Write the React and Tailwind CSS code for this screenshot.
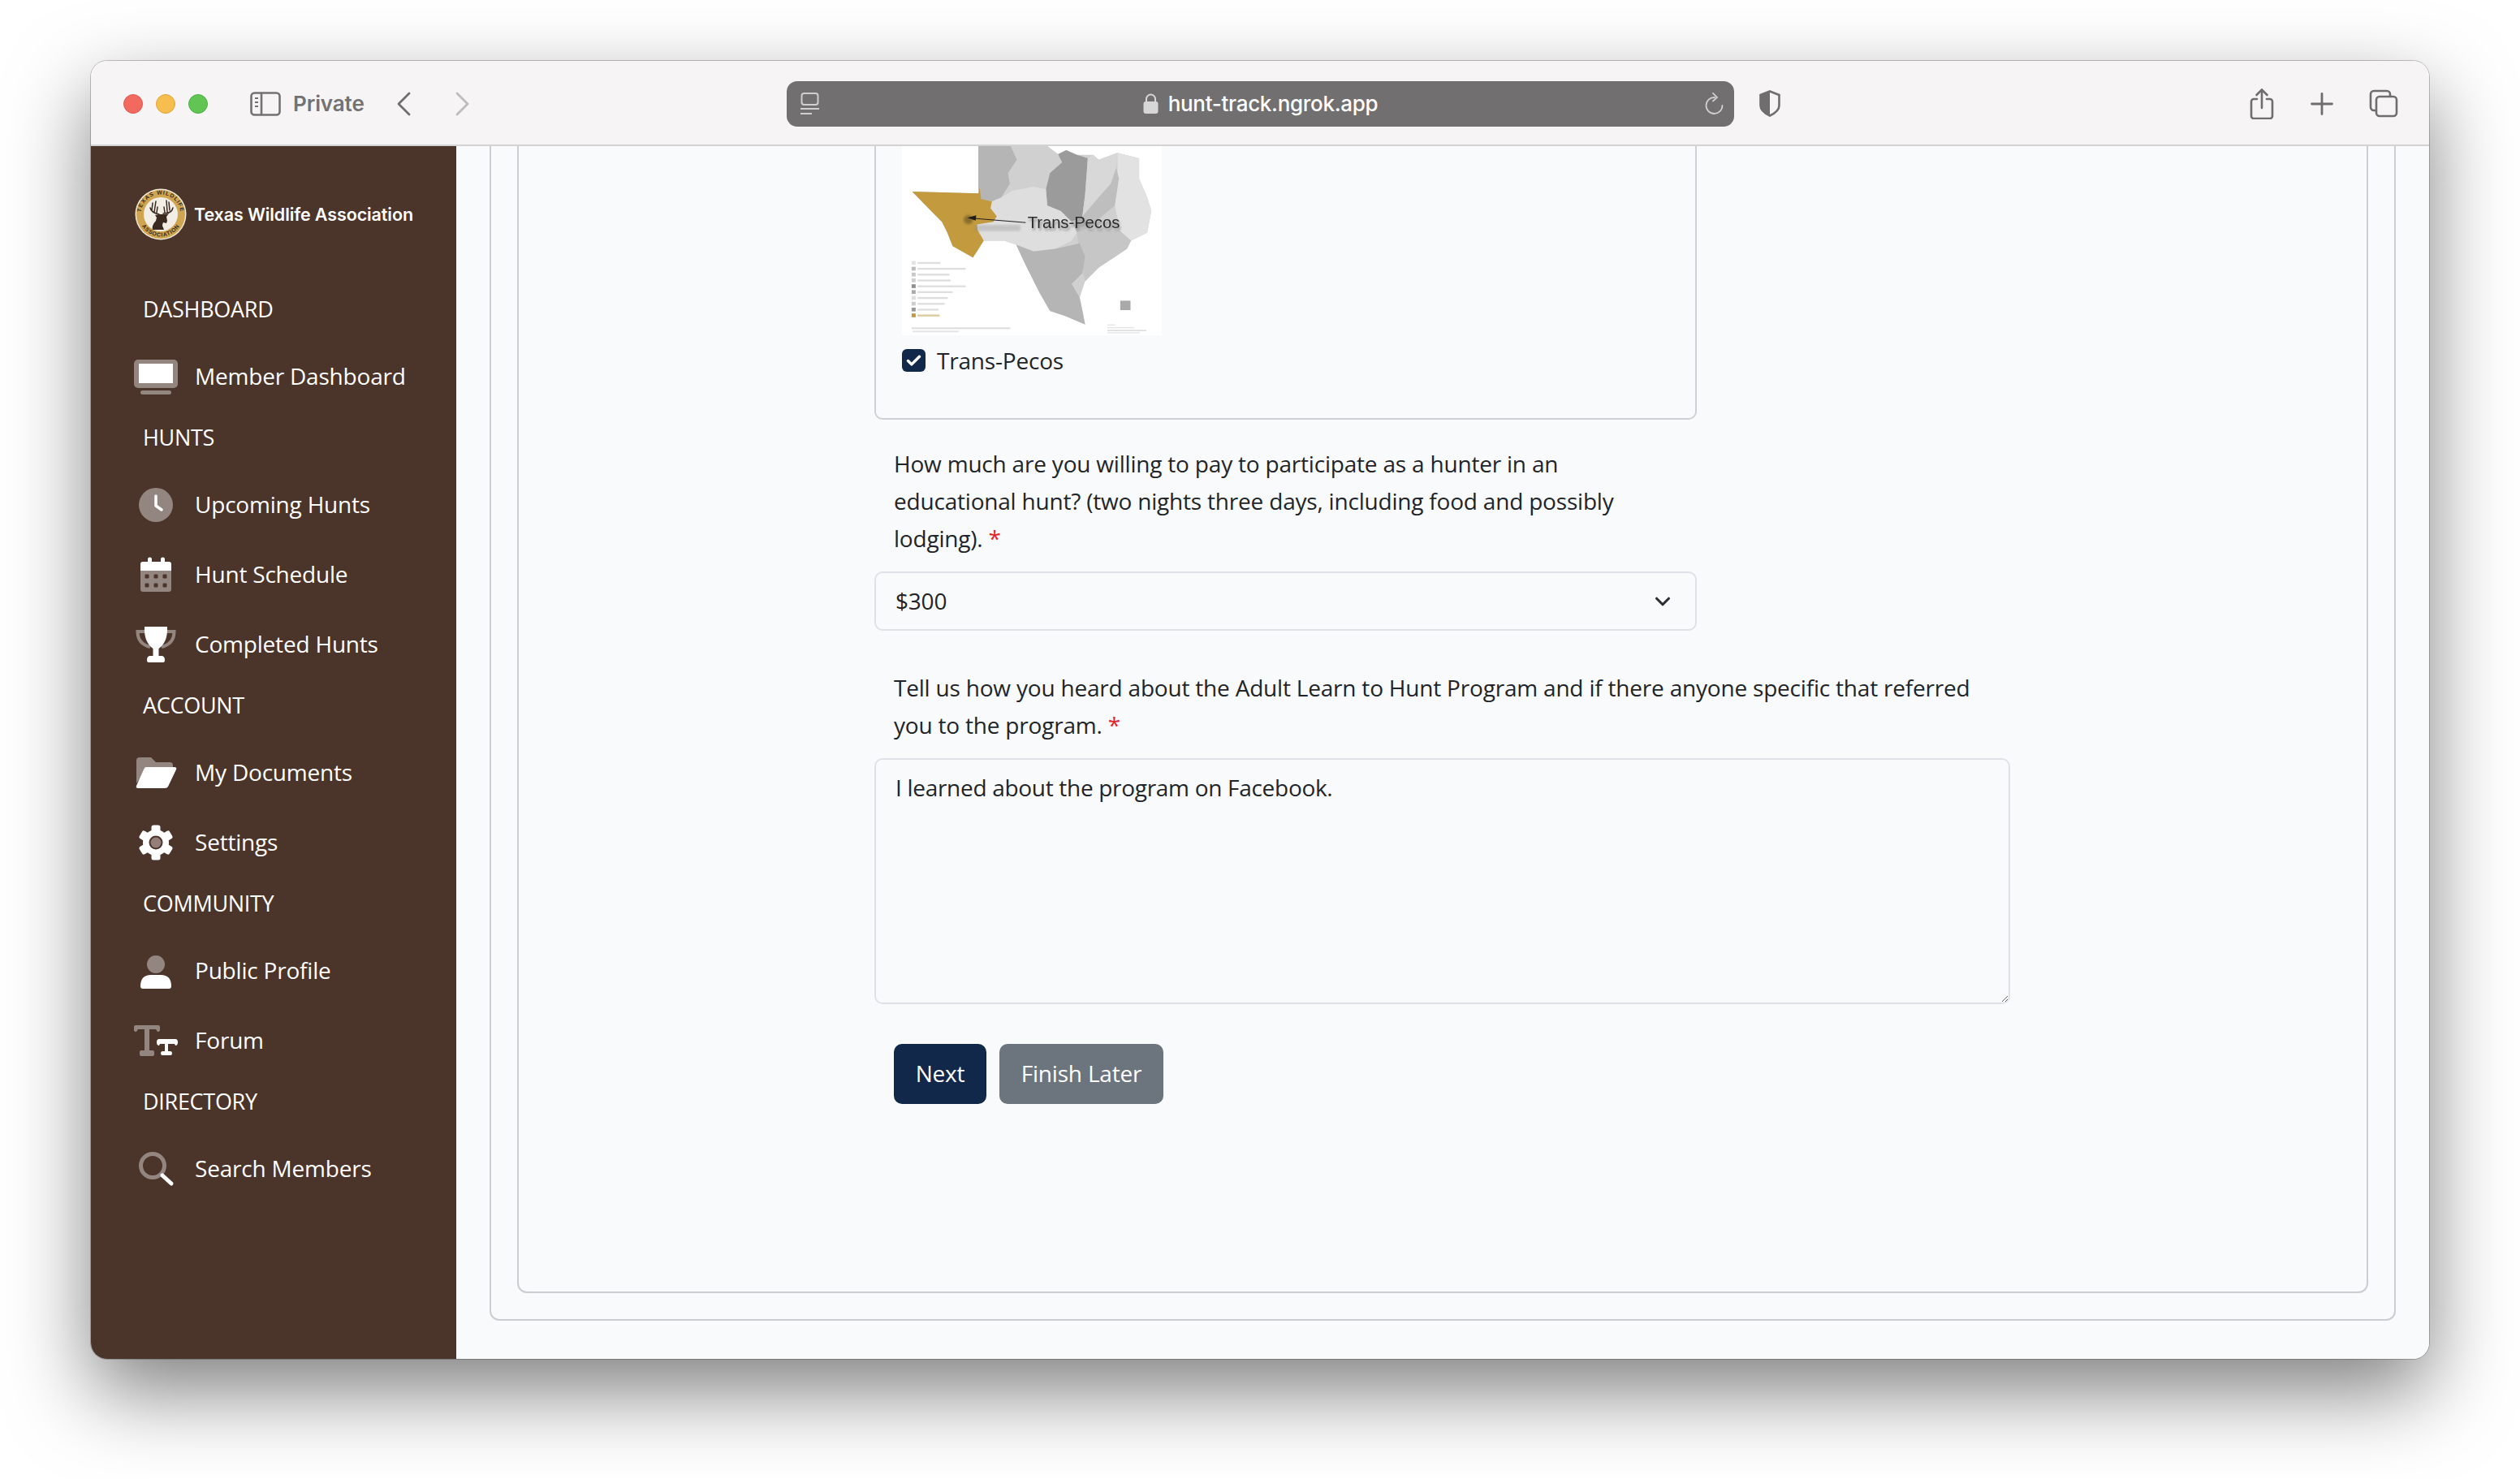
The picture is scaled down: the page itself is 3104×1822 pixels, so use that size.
import React from "react";
import { ChevronDown, Check } from "lucide-react";

const BODY_FONT = "font-['Open_Sans',sans-serif]";

function TrafficLight({ color }) {
  return <span className={`h-6 w-6 rounded-full border ${color}`} />;
}

function SidebarToggleIcon() {
  return (
    <svg width="38" height="30" viewBox="0 0 38 30" fill="none" stroke="#737172" strokeWidth="2.6">
      <rect x="1.5" y="1.5" width="35" height="27" rx="4" />
      <path d="M14 1.5v27" />
      <path d="M6 8h4M6 13h4M6 18h4" strokeWidth="2.2" />
    </svg>
  );
}

function TabOverviewIcon() {
  return (
    <svg width="36" height="35" viewBox="0 0 36 35" fill="none" stroke="#6f6d6e" strokeWidth="2.6">
      <path d="M9 26H6a4 4 0 0 1-4-4V6a4 4 0 0 1 4-4h16a4 4 0 0 1 4 4v3" />
      <rect x="9" y="9" width="25" height="24" rx="4" />
    </svg>
  );
}

function ShareIcon() {
  return (
    <svg width="30" height="38" viewBox="0 0 30 38" fill="none" stroke="#6f6d6e" strokeWidth="2.6" strokeLinecap="round">
      <path d="M9 13H5a3 3 0 0 0-3 3v18a3 3 0 0 0 3 3h20a3 3 0 0 0 3-3V16a3 3 0 0 0-3-3h-4" />
      <path d="M15 24V2M8.5 8L15 1.5 21.5 8" />
    </svg>
  );
}

function PlusIcon() {
  return (
    <svg width="28" height="28" viewBox="0 0 28 28" stroke="#6f6d6e" strokeWidth="2.8" strokeLinecap="round">
      <path d="M14 1.5v25M1.5 14h25" />
    </svg>
  );
}

function ShieldIcon() {
  return (
    <svg width="26" height="33" viewBox="0 0 26 33">
      <path d="M13 1.5L24.5 6v13c0 5-4 9-11.5 12.5C5.500 28 1.500 24 1.500 19V6z" fill="none" stroke="#6f6d6e" strokeWidth="2.6" />
      <path d="M13 1.500L1.500 6v13c0 5 4 9 11.500 12.500z" fill="#6f6d6e" />
    </svg>
  );
}

function PageMenuIcon() {
  return (
    <svg width="23" height="27" viewBox="0 0 23 27" fill="none" stroke="#d0cfcf" strokeWidth="2">
      <rect x="1.500" y="1" width="20" height="14" rx="3" />
      <path d="M0 20h23" />
      <path d="M0 26h14" />
    </svg>
  );
}

function LockIcon() {
  return (
    <svg width="19" height="25" viewBox="0 0 19 25">
      <path d="M4 11V7a5.500 5.500 0 0 1 11 0v4" fill="none" stroke="#d8d7d7" strokeWidth="2" />
      <rect x="0.500" y="10" width="18" height="15" rx="3" fill="#d8d7d7" />
    </svg>
  );
}

function ReloadIcon() {
  return (
    <svg width="23" height="28" viewBox="0 0 23 28" fill="none" stroke="#d0cfcf" strokeWidth="1.800" strokeLinecap="round">
      <path d="M12 6A10 10 0 1 0 21.500 16" />
      <path d="M10 0.800L15 6l-5 4.500" />
    </svg>
  );
}

function BrowserBar() {
  return (
    <header className="flex h-[105px] shrink-0 items-center border-b-2 border-[#d4d3d3] bg-[#f6f4f5] pl-[40px] pt-[2px]">
      <div className="flex gap-4">
        <TrafficLight color="border-[#e2574e] bg-[#f2695f]" />
        <TrafficLight color="border-[#dfa33c] bg-[#f6bd4f]" />
        <TrafficLight color="border-[#4fae44] bg-[#61c554]" />
      </div>
      <div className="ml-[52px]">
        <SidebarToggleIcon />
      </div>
      <span className="ml-[15px] w-[88px] font-['Inter',sans-serif] text-[26px] font-semibold tracking-[-0.1px] text-[#737172]">Private</span>
      <svg className="ml-[40px]" width="17" height="30" viewBox="0 0 17 30" fill="none" stroke="#6f6d6e" strokeWidth="2.800" strokeLinecap="round" strokeLinejoin="round">
        <path d="M15 2L2 15l13 13" />
      </svg>
      <svg className="ml-[55px]" width="17" height="30" viewBox="0 0 17 30" fill="none" stroke="#bdbcbc" strokeWidth="2.800" strokeLinecap="round" strokeLinejoin="round">
        <path d="M2 2l13 13L2 28" />
      </svg>
      <div className="ml-[391px] flex h-[56px] w-[1167px] items-center rounded-[13px] bg-[#716f70] pl-[17px] pr-[13px]">
        <PageMenuIcon />
        <div className="flex flex-1 items-center justify-center gap-[12px] pr-[4px]">
          <LockIcon />
          <span className="font-['Inter',sans-serif] text-[26px] font-medium tracking-[-0.3px] text-white">hunt-track.ngrok.app</span>
        </div>
        <ReloadIcon />
      </div>
      <div className="ml-[31px]">
        <ShieldIcon />
      </div>
      <div className="ml-[578px]">
        <ShareIcon />
      </div>
      <div className="ml-[45px]">
        <PlusIcon />
      </div>
      <div className="ml-[44px]">
        <TabOverviewIcon />
      </div>
    </header>
  );
}

function WildlifeLogo() {
  return (
    <svg width="64" height="64" viewBox="0 0 64 64" className="shrink-0">
      <defs>
        <path id="ring-top" d="M7.500 32A24.500 24.500 0 0 1 56.500 32" />
        <path id="ring-bottom" d="M4.500 32A27.500 27.500 0 0 0 59.500 32" />
      </defs>
      <circle cx="32" cy="32" r="31.500" fill="#efe9dc" />
      <circle cx="32" cy="32" r="30" fill="#cfa552" />
      <circle cx="32" cy="32" r="21" fill="#f2eee5" />
      <text fontSize="7" fontWeight="700" fill="#3b2a20" fontFamily="Liberation Sans, sans-serif" letterSpacing="0.900">
        <textPath href="#ring-top" startOffset="50%" textAnchor="middle">TEXAS WILDLIFE</textPath>
      </text>
      <text fontSize="7" fontWeight="700" fill="#3b2a20" fontFamily="Liberation Sans, sans-serif" letterSpacing="0.700">
        <textPath href="#ring-bottom" startOffset="50%" textAnchor="middle">ASSOCIATION</textPath>
      </text>
      <path d="M30 32C25 31 20 29 19 24M21 27l1-9M24 29l2-13M27 30l1-7M35 31C41 31 46 29 47 24M43 27l-1-10M40 29l-1-14M37 30l-1-7" fill="none" stroke="#3a2a20" strokeWidth="1.500" strokeLinecap="round" />
      <path d="M25 33l5-1h8l4-1-3 4 1 5-1 3-4-1-1 3 2 6H22c-1-4 1-8 4-11l1-4z" fill="#3a2a20" />
      <path d="M34 46l4-1 1 3-3 2z" fill="#f2eee5" />
    </svg>
  );
}

function DashboardIcon() {
  return (
    <>
      <rect x="0" y="6" width="54" height="35" rx="5" fill="#fff" opacity="0.4" />
      <rect x="6" y="11" width="42" height="24" fill="#fff" />
      <rect x="8" y="44" width="38" height="5" rx="2.500" fill="#fff" opacity="0.4" />
    </>
  );
}

function ClockIcon() {
  return (
    <>
      <circle cx="27" cy="27" r="21" fill="#fff" opacity="0.4" />
      <path d="M27 16v12l7 5" fill="none" stroke="#fff" strokeWidth="3.500" strokeLinecap="round" strokeLinejoin="round" />
    </>
  );
}

function CalendarIcon() {
  const dots = [16, 27, 38];
  return (
    <>
      <path d="M8 22h38v23a3 3 0 0 1-3 3H11a3 3 0 0 1-3-3z" fill="#fff" opacity="0.4" />
      <path d="M8 22v-8a3 3 0 0 1 3-3h6V8a2.500 2.500 0 0 1 5 0v3h11V8a2.500 2.500 0 0 1 5 0v3h5a3 3 0 0 1 3 3v8z" fill="#fff" />
      {dots.map((x) => (
        <React.Fragment key={x}>
          <rect x={x - 2.500} y="26.500" width="5" height="5" rx="1.200" fill="#4b342a" />
          <rect x={x - 2.500} y="37.500" width="5" height="5" rx="1.200" fill="#4b342a" />
        </React.Fragment>
      ))}
    </>
  );
}

function TrophyIcon() {
  return (
    <>
      <path d="M13 11H4.500Q4.500 26 20 30M41 11H49.500Q49.500 26 34 30" fill="none" stroke="#fff" strokeWidth="4" opacity="0.4" />
      <path d="M13 5H41Q42 24 30.500 32V41H35Q38 42 38 46Q38 49 36 49H18Q16 49 16 46Q16 42 19 41H23.500V32Q12 24 13 5Z" fill="#fff" />
    </>
  );
}

function FolderIcon() {
  return (
    <>
      <path d="M3 12q0-4 4-4h14l6 6h17q4 0 4 4v5H16L3 40z" fill="#fff" opacity="0.4" />
      <path d="M15 20H50Q53 20 52 23L42 44Q41 46 38 46H5Q2 46 3 43L12 23Q13 20 15 20Z" fill="#fff" />
    </>
  );
}

function GearIcon() {
  const angles = [0, 60, 120, 180, 240, 300];
  return (
    <>
      {angles.map((a) => (
        <rect key={a} x="21.500" y="5.500" width="11" height="12" rx="2.500" fill="#fff" transform={`rotate(${a} 27 27)`} />
      ))}
      <circle cx="27" cy="27" r="16" fill="#fff" />
      <circle cx="27" cy="27" r="8.500" fill="#4b342a" />
      <circle cx="27" cy="27" r="6.500" fill="#937f78" />
    </>
  );
}

function PersonIcon() {
  return (
    <>
      <circle cx="27" cy="19" r="11" fill="#fff" opacity="0.4" />
      <path d="M8 46Q8 32 21 32H33Q46 32 46 46Q46 49 43 49H11Q8 49 8 46Z" fill="#fff" />
    </>
  );
}

function TextHeightIcon() {
  return (
    <>
      <path d="M0 14V10q0-2 2-2h28q2 0 2 2v4q0 2-2 2h-1l-2-3h-8v26h4q2 0 2 2v3q0 2-2 2H9q-2 0-2-2v-3q0-2 2-2h4V13H5l-2 3q-3 0-3-2z" fill="#fff" opacity="0.4" />
      <path d="M28 29q0-4 3-4h20q3 0 3 4t-3 4l-1-2h-8v9h3q2 0 2 2.500T45 45H35q-2 0-2-2.500t2-2.500h3v-9h-6l-1 2q-3 0-3-4z" fill="#fff" />
    </>
  );
}

function SearchIcon() {
  return (
    <>
      <circle cx="23" cy="23" r="14.500" fill="none" stroke="#fff" strokeWidth="5" opacity="0.4" />
      <path d="M35 35l11 10" stroke="#fff" strokeWidth="5" strokeLinecap="round" />
    </>
  );
}

const sidebarGroups = [
  { title: "DASHBOARD", items: [{ label: "Member Dashboard", icon: <DashboardIcon /> }] },
  {
    title: "HUNTS",
    items: [
      { label: "Upcoming Hunts", icon: <ClockIcon /> },
      { label: "Hunt Schedule", icon: <CalendarIcon /> },
      { label: "Completed Hunts", icon: <TrophyIcon /> },
    ],
  },
  {
    title: "ACCOUNT",
    items: [
      { label: "My Documents", icon: <FolderIcon /> },
      { label: "Settings", icon: <GearIcon /> },
    ],
  },
  {
    title: "COMMUNITY",
    items: [
      { label: "Public Profile", icon: <PersonIcon /> },
      { label: "Forum", icon: <TextHeightIcon /> },
    ],
  },
  { title: "DIRECTORY", items: [{ label: "Search Members", icon: <SearchIcon /> }] },
];

function Sidebar() {
  return (
    <aside className={`w-[450px] shrink-0 bg-[#4b342a] pl-[53px] pt-[52px] text-white ${BODY_FONT}`}>
      <div className="flex h-[64px] items-center gap-[9px] pl-[1px]">
        <WildlifeLogo />
        <span className="whitespace-nowrap font-['Inter',sans-serif] text-[21.500px] font-semibold tracking-[-0.1px]">Texas Wildlife Association</span>
      </div>
      <nav className="mt-[53px]">
        {sidebarGroups.map((group) => (
          <div key={group.title}>
            <div className="h-[72px] pl-[11px] pt-[16px] text-[27px] leading-[31px] tracking-[-0.3px]">{group.title}</div>
            {group.items.map((item) => (
              <div key={item.label} className="flex h-[86px] items-center gap-[21px]">
                <svg width="54" height="54" viewBox="0 0 54 54" className="shrink-0">
                  {item.icon}
                </svg>
                <span className="pb-[2px] whitespace-nowrap text-[28px] tracking-[-0.2px]">{item.label}</span>
              </div>
            ))}
          </div>
        ))}
      </nav>
    </aside>
  );
}

// picture of the ecoregion map, coordinates are in zoomed-reference units
function RegionMap() {
  const legend = [
    ["#e3e3e3", 85],
    ["#bdbdbd", 178],
    ["#c9c9c9", 118],
    ["#cfcfcf", 122],
    ["#8f8f8f", 178],
    ["#ababab", 130],
    ["#dedede", 112],
    ["#cdcdcd", 100],
    ["#9a9a9a", 78],
    ["#c39a3e", 82],
  ];
  return (
    <svg viewBox="153 30 960 700" className="block h-[233px] w-[320px] bg-white">
      <defs>
        <filter id="soft">
          <feGaussianBlur stdDeviation="2.200" />
        </filter>
        <filter id="softer">
          <feGaussianBlur stdDeviation="4" />
        </filter>
      </defs>
      <g filter="url(#soft)">
        <path d="M435 30H690L730 60 760 45 800 62 860 62 880 80 950 55 1030 75 1030 150 1060 220 1075 270 1060 350 1000 380 985 410 880 480 830 530 810 590 820 640 830 690 760 660 700 640 660 570 610 470 575 395 530 380 450 380 430 420 415 442 340 400 320 350 300 310 250 260 190 198 435 205Z" fill="#d0d0d0" />
        <path d="M435 30H555L578 80 545 130 552 170 520 220 485 235 445 225 435 190Z" fill="#b5b5b5" />
        <path d="M555 30H690L730 60 745 90 700 130 685 190 640 180 560 195 520 220 552 170 545 130 578 80Z" fill="#d0d0d0" />
        <path d="M730 60L760 45 800 62 840 75 830 210 820 290 780 310 740 270 690 250 685 190 700 130 745 90Z" fill="#9b9b9b" />
        <path d="M840 75L860 62 880 80 950 55 945 110 925 170 880 220 840 270 820 290 830 210Z" fill="#d8d8d8" />
        <path d="M950 55L1030 75 1030 150 1060 220 1075 270 1060 350 1000 380 960 345 940 250 950 150Z" fill="#e2e2e2" />
        <path d="M945 110L955 150 940 250 880 300 830 340 800 350 780 310 820 290 880 220 925 170Z" fill="#bebebe" />
        <path d="M485 235L520 220 560 195 640 180 685 190 690 250 740 270 780 310 800 350 780 380 720 410 640 420 575 395 530 380 450 380 432 340 430 320 490 310 503 290 480 260Z" fill="#dedede" />
        <path d="M800 350L830 340 960 345 1000 380 985 410 880 480 830 530 810 440Z" fill="#c6c6c6" />
        <path d="M575 395L640 420 720 410 810 390 830 440 820 500 780 540 810 590 820 640 830 690 760 660 700 640 660 570 610 470Z" fill="#b5b5b5" />
        <path d="M190 198L435 205 440 185 445 225 485 235 480 260 503 290 490 310 430 320 432 340 455 380 430 420 415 442 340 400 320 350 300 310 250 260Z" fill="#c39a3e" />
        <rect x="960" y="602" width="38" height="35" fill="#a9a9a9" />
      </g>
      <g filter="url(#soft)">
        {legend.map(([color, width], i) => (
          <g key={i}>
            <rect x="188" y={455 + i * 21.600} width="15" height="14" fill={color} />
            <rect x="210" y={459 + i * 21.600} width={width} height="7" fill={i === 9 ? "#dccb9f" : "#dedede"} />
          </g>
        ))}
        <rect x="188" y="701" width="365" height="6" fill="#dcdcdc" />
        <rect x="192" y="713" width="170" height="6" fill="#e4e4e4" />
        <rect x="912" y="690" width="30" height="4" fill="#e4e4e4" />
        <rect x="912" y="700" width="100" height="4" fill="#e4e4e4" />
        <rect x="912" y="710" width="145" height="5" fill="#dedede" />
        <rect x="912" y="719" width="120" height="4" fill="#e4e4e4" />
      </g>
      <rect x="420" y="322" width="170" height="22" fill="#8f8f8f" opacity="0.35" filter="url(#softer)" />
      <circle cx="398" cy="302" r="17" fill="#5c4a24" opacity="0.55" filter="url(#softer)" />
      <text x="622" y="342" fontSize="61" fill="#666" opacity="0.65" filter="url(#softer)" fontFamily="Liberation Sans, sans-serif">Trans-Pecos</text>
      <path d="M610 313L425 298" stroke="#1d1d1d" strokeWidth="3" />
      <path d="M395 295l32-9-2 20z" fill="#1d1d1d" />
      <text x="617" y="332" fontSize="61" fill="#2c2c2c" fontFamily="Liberation Sans, sans-serif" filter="url(#soft)">Trans-Pecos</text>
    </svg>
  );
}

function RequiredMark() {
  return <span className="text-[#e0262b]">*</span>;
}

function HuntForm() {
  return (
    <div className={`flex-1 text-[28px] tracking-[-0.2px] text-[#212529] ${BODY_FONT}`}>
      <div className="h-[337px] w-[1013px] rounded-b-[10px] border-2 border-t-0 border-[#cfd0d3] pl-[32px]">
        <RegionMap />
        <label className="mt-[17px] flex items-center gap-[14px]">
          <span className="flex h-[28px] w-[29px] items-center justify-center rounded-[6px] bg-[#12284a]">
            <Check size={21} strokeWidth={4} color="#fff" />
          </span>
          <span className="leading-[28px]">Trans-Pecos</span>
        </label>
      </div>

      <p className="mt-[31px] whitespace-nowrap pl-[24px] leading-[46px]">
        How much are you willing to pay to participate as a hunter in an
        <br />
        educational hunt? (two nights three days, including food and possibly
        <br />
        lodging). <RequiredMark />
      </p>
      <div className="relative mt-[18px] w-[1013px]">
        <select
          defaultValue="$300"
          className="h-[73px] w-full appearance-none rounded-[10px] border-2 border-[#dee2e6] bg-transparent pb-[2px] pl-[24px] text-[#212529] outline-none"
        >
          <option>$300</option>
        </select>
        <ChevronDown size={30} strokeWidth={2.500} color="#2b2f33" className="absolute right-[27px] top-[22px]" />
      </div>

      <p className="mt-[47px] whitespace-nowrap pl-[24px] leading-[46px]">
        Tell us how you heard about the Adult Learn to Hunt Program and if there anyone specific that referred
        <br />
        you to the program. <RequiredMark />
      </p>
      <textarea
        defaultValue="I learned about the program on Facebook."
        className="mt-[18px] block h-[303px] w-[1399px] rounded-[10px] border-2 border-[#dee2e6] bg-transparent px-[24px] py-[11px] leading-[46px] tracking-[-0.3px] text-[#212529] outline-none"
      />

      <div className="mt-[49px] flex gap-[16px] pl-[24px]">
        <button className="h-[74px] w-[114px] rounded-[10px] bg-[#12284a] pb-[2px] text-white">Next</button>
        <button className="h-[74px] w-[202px] rounded-[10px] bg-[#6c757d] pb-[2px] text-white">Finish Later</button>
      </div>
    </div>
  );
}

export default function App() {
  return (
    <div className="h-[1822px] w-[3104px] overflow-hidden bg-white pl-[112px] pt-[75px]">
      <div className="flex h-[1599px] w-[2880px] flex-col overflow-hidden rounded-[20px] shadow-[0_0_0_1px_rgba(0,0,0,0.22),0_40px_100px_rgba(0,0,0,0.5)]">
        <BrowserBar />
        <div className="flex min-h-0 flex-1">
          <Sidebar />
          <main className="flex min-w-0 flex-1 bg-[#f9fafc] px-[41px] pb-[47px]">
            <div className="flex flex-1 rounded-b-[12px] border-2 border-t-0 border-[#cbcdd0] pl-[32px] pr-[32px] pb-[32px]">
              <div className="flex flex-1 rounded-b-[12px] border-2 border-t-0 border-[#cbcdd0] pl-[438px]">
                <HuntForm />
              </div>
            </div>
          </main>
        </div>
      </div>
    </div>
  );
}
